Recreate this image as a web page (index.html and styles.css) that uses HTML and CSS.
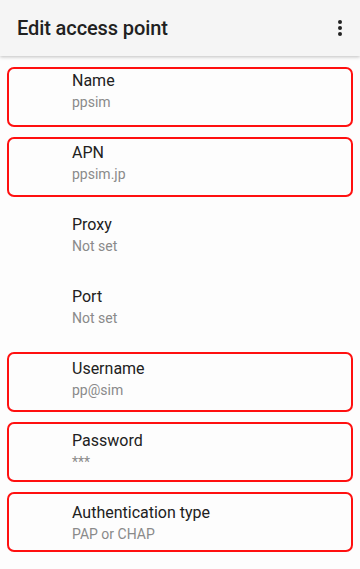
FILE: index.html
```html
<!DOCTYPE html>
<html>
<head>
<meta charset="utf-8">
<link rel="stylesheet" href="styles.css">
</head>
<body>
<header class="appbar">
  <h1 class="title">Edit access point</h1>
  <div class="more" aria-label="More options"><span></span><span></span><span></span></div>
</header>
<main class="list">
  <div class="row mark mark-a"><div class="label">Name</div><div class="value">ppsim</div></div>
  <div class="row mark mark-b"><div class="label">APN</div><div class="value">ppsim.jp</div></div>
  <div class="row"><div class="label">Proxy</div><div class="value">Not set</div></div>
  <div class="row"><div class="label">Port</div><div class="value">Not set</div></div>
  <div class="row mark mark-c"><div class="label">Username</div><div class="value">pp@sim</div></div>
  <div class="row mark mark-d"><div class="label">Password</div><div class="value">***</div></div>
  <div class="row mark mark-e"><div class="label">Authentication type</div><div class="value">PAP or CHAP</div></div>
</main>
</body>
</html>
```
FILE: styles.css
```css
html, body {
  margin: 0;
  padding: 0;
  background: #fdfdfd;
  font-family: Roboto, "Liberation Sans", sans-serif;
  overflow: hidden;
}
.appbar {
  height: 56px;
  background: #f5f5f5;
  display: flex;
  align-items: center;
  justify-content: space-between;
  padding: 0 18px 0 17px;
  box-sizing: border-box;
  box-shadow: 0 1px 3px rgba(0,0,0,0.18), 0 2px 4px rgba(0,0,0,0.06);
  position: relative;
  z-index: 1;
}
.title {
  margin: 0;
  font-size: 20px;
  font-weight: 500;
  color: #212121;
  letter-spacing: -0.1px;
}
.more {
  display: flex;
  flex-direction: column;
  gap: 2px;
  align-items: center;
}
.more span {
  width: 4px;
  height: 4px;
  border-radius: 50%;
  background: #222;
}
.list {
  display: flex;
  flex-direction: column;
}
.row {
  height: 72px;
  box-sizing: border-box;
  padding: 15px 16px 0 72px;
  position: relative;
}
.label {
  font-size: 16px;
  line-height: 20px;
  color: #212121;
}
.value {
  font-size: 14px;
  line-height: 20px;
  margin-top: 1px;
  color: #8a8a8a;
}
.mark::after {
  content: "";
  position: absolute;
  left: 7px;
  right: 7px;
  height: 60px;
  box-sizing: border-box;
  border: 2.5px solid #ff1010;
  border-radius: 7px;
}
.mark-a::after { top: 11px; }
.mark-b::after { top: 9px; }
.mark-c::after { top: 8px; }
.mark-d::after { top: 6px; }
.mark-e::after { top: 4px; }
```
